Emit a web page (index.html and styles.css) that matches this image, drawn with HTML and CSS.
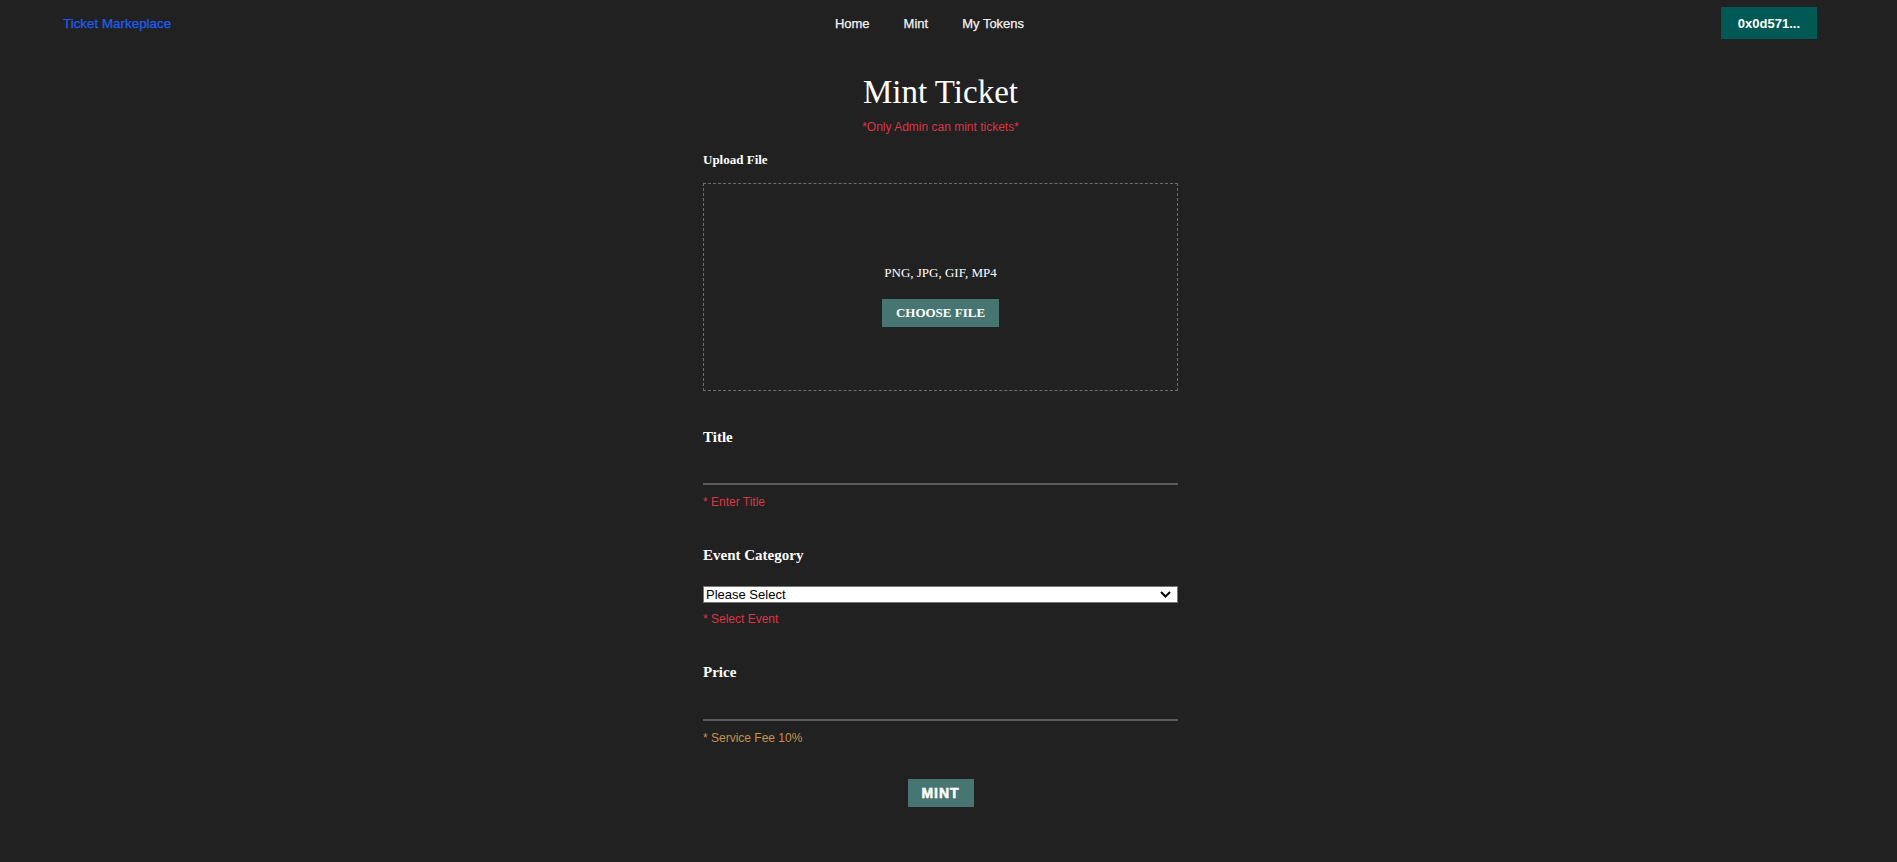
FILE: index.html
```html
<!DOCTYPE html>
<html lang="en">
<head>
<meta charset="utf-8">
<title>Mint Ticket</title>
<link rel="stylesheet" href="styles.css">
</head>
<body>
<header class="topbar">
  <a class="brand" href="#">Ticket Markeplace</a>
  <nav class="nav">
    <a href="#">Home</a>
    <a href="#">Mint</a>
    <a href="#">My Tokens</a>
  </nav>
  <div class="account">
    <button class="wallet" type="button">0x0d571...</button>
  </div>
</header>

<div class="page">
  <main class="form-col">
    <h1 class="title">Mint Ticket</h1>
    <p class="admin-note">*Only Admin can mint tickets*</p>

    <p class="upload-label">Upload File</p>
    <div class="dropzone">
      <p class="formats">PNG, JPG, GIF, MP4</p>
      <button class="choose" type="button">CHOOSE FILE</button>
    </div>

    <div class="field first">
      <label class="field-label">Title</label>
      <input class="line-input" type="text">
      <p class="hint error">* Enter Title</p>
    </div>

    <div class="field">
      <label class="field-label">Event Category</label>
      <div class="select-wrap">
        <select class="select">
          <option>Please Select</option>
        </select>
        <svg class="chevron" width="11" height="7" viewBox="0 0 11 7"><polyline points="1,1 5.5,5.5 10,1" fill="none" stroke="#000" stroke-width="2"/></svg>
      </div>
      <p class="hint error tight">* Select Event</p>
    </div>

    <div class="field">
      <label class="field-label">Price</label>
      <input class="line-input price" type="text">
      <p class="hint fee">* Service Fee 10%</p>
    </div>

    <div class="actions">
      <button class="mint" type="button">MINT</button>
    </div>
  </main>
</div>
</body>
</html>
```

FILE: styles.css
```css
* { box-sizing: border-box; }

html, body {
  margin: 0;
  background: #212121;
  height: 100%;
}

body {
  color: #fff;
  font-family: "Liberation Serif", "Times New Roman", serif;
}

/* Header */
.topbar {
  display: grid;
  grid-template-columns: 1fr auto 1fr;
  align-items: center;
  height: 46px;
  padding: 0 80px 0 63px;
  font-family: "Liberation Sans", Arial, sans-serif;
  font-size: 13px;
}

.brand {
  color: #1d5ef5;
  font-size: 13.4px;
  text-decoration: none;
  -webkit-text-stroke: 0.25px #1d5ef5;
  justify-self: start;
}

.nav {
  display: flex;
  gap: 34px;
  margin-right: 21px;
}

.nav a {
  color: #f2f2f2;
  text-decoration: none;
  -webkit-text-stroke: 0.25px #f2f2f2;
}

.account {
  justify-self: end;
}

.wallet {
  height: 32px;
  padding: 0 17px;
  border: 0;
  background: #005955;
  color: #fff;
  font-family: "Liberation Sans", Arial, sans-serif;
  font-size: 13px;
  font-weight: bold;
}

/* Page column */
.page {
  padding-right: 16px;
}

.form-col {
  width: 475px;
  margin: 0 auto;
  display: flex;
  flex-direction: column;
}

.title {
  margin: 28px 0 0;
  font-size: 33px;
  line-height: 36px;
  font-weight: normal;
  text-align: center;
}

.admin-note {
  margin: 10px 0 0;
  font-family: "Liberation Sans", Arial, sans-serif;
  font-size: 12px;
  line-height: 14px;
  color: #dc3545;
  text-align: center;
}

.upload-label {
  margin: 18px 0 0;
  font-size: 13px;
  line-height: 15px;
  font-weight: bold;
}

.dropzone {
  margin-top: 16px;
  height: 208px;
  border: 1px dashed #6e6e6e;
  padding-top: 81px;
  display: flex;
  flex-direction: column;
  align-items: center;
}

.formats {
  margin: 0;
  font-size: 13px;
  line-height: 15px;
}

.choose {
  margin-top: 19px;
  height: 28px;
  padding: 0 14px;
  border: 0;
  background: #477572;
  color: #fff;
  font-family: "Liberation Serif", "Times New Roman", serif;
  font-size: 13px;
  font-weight: bold;
}

/* Fields */
.field {
  display: flex;
  flex-direction: column;
  margin-top: 38px;
}

.field-label {
  font-size: 15px;
  line-height: 17px;
  font-weight: bold;
}

.line-input {
  height: 39px;
  border: 0;
  border-bottom: 2px solid #5c5c5c;
  background: transparent;
  color: #fff;
  outline: none;
}

.line-input.price {
  height: 40px;
}

.hint {
  margin: 10px 0 0;
  font-family: "Liberation Sans", Arial, sans-serif;
  font-size: 12px;
  line-height: 14px;
}

.hint.tight {
  margin-top: 9px;
}

.error { color: #dc3545; }
.fee { color: #c8914a; }

.select-wrap {
  position: relative;
  margin-top: 22px;
}

.select {
  display: block;
  width: 100%;
  height: 17px;
  padding: 0 0 0 2px;
  border: 1px solid #767676;
  background: #fff;
  color: #000;
  font-family: "Liberation Sans", Arial, sans-serif;
  font-size: 13px;
  line-height: 15px;
  -webkit-appearance: none;
  appearance: none;
  border-radius: 0;
}

.chevron {
  position: absolute;
  right: 7px;
  top: 5px;
  pointer-events: none;
}

.actions {
  display: flex;
  justify-content: center;
  margin-top: 34px;
}

.mint {
  height: 28px;
  width: 66px;
  border: 0;
  background: #477572;
  color: #fff;
  font-family: "Liberation Sans", Arial, sans-serif;
  font-size: 14px;
  font-weight: bold;
  letter-spacing: 1px;
  -webkit-text-stroke: 0.5px #fff;
}
```
